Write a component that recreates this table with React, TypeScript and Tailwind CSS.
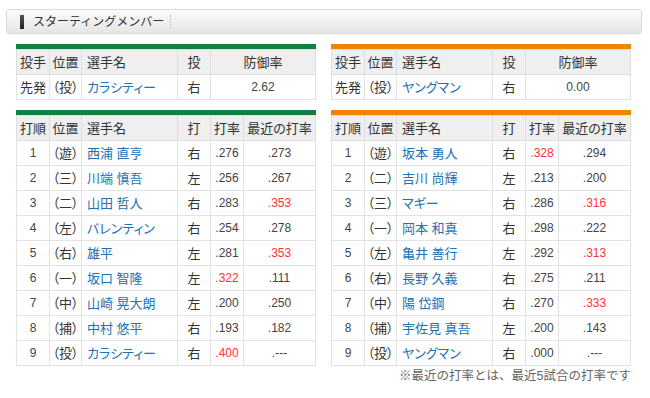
const pitchers = {
  left: { order: "先発", pos: "投", name: "カラシティー", hand: "右", era: "2.62" },
  right: { order: "先発", pos: "投", name: "ヤングマン", hand: "右", era: "0.00" },
};

type Batter = [number, string, string, string, string, string, boolean, boolean];

const leftBatters: Batter[] = [
  [1, "遊", "西浦 直亨", "右", ".276", ".273", false, false],
  [2, "三", "川端 慎吾", "左", ".256", ".267", false, false],
  [3, "二", "山田 哲人", "右", ".283", ".353", false, true],
  [4, "左", "バレンティン", "右", ".254", ".278", false, false],
  [5, "右", "雄平", "左", ".281", ".353", false, true],
  [6, "一", "坂口 智隆", "左", ".322", ".111", true, false],
  [7, "中", "山崎 晃大朗", "左", ".200", ".250", false, false],
  [8, "捕", "中村 悠平", "右", ".193", ".182", false, false],
  [9, "投", "カラシティー", "右", ".400", ".---", true, false],
];

const rightBatters: Batter[] = [
  [1, "遊", "坂本 勇人", "右", ".328", ".294", true, false],
  [2, "二", "吉川 尚輝", "左", ".213", ".200", false, false],
  [3, "三", "マギー", "右", ".286", ".316", false, true],
  [4, "一", "岡本 和真", "右", ".298", ".222", false, false],
  [5, "左", "亀井 善行", "左", ".292", ".313", false, true],
  [6, "右", "長野 久義", "右", ".275", ".211", false, false],
  [7, "中", "陽 岱鋼", "右", ".270", ".333", false, true],
  [8, "捕", "宇佐見 真吾", "左", ".200", ".143", false, false],
  [9, "投", "ヤングマン", "右", ".000", ".---", false, false],
];

const th = "h-[25px] p-0 border border-[#dedede] bg-[#efefef] font-normal text-[13px] text-[#333] text-center";
const td = "h-[25px] p-0 border border-[#e2e2e2] bg-white text-[13px] text-[#333] text-center";
const num = "h-[25px] p-0 border border-[#e2e2e2] bg-white text-[12px] text-center";

const PitcherTable = ({ side, bar }: { side: "left" | "right"; bar: string }) => {
  const p = pitchers[side];
  return (
    <div className="w-[300px]">
      <div className={`h-[5px] ${bar}`} />
      <table className="w-full table-fixed border-collapse">
        <colgroup>
          <col className="w-[33px]" />
          <col className="w-[32px]" />
          <col className="w-[96px]" />
          <col className="w-[33px]" />
          <col />
        </colgroup>
        <thead>
          <tr>
            <th className={th}>投手</th>
            <th className={th}>位置</th>
            <th className={`${th} !text-left pl-[5px]`}>選手名</th>
            <th className={th}>投</th>
            <th className={th}>防御率</th>
          </tr>
        </thead>
        <tbody>
          <tr>
            <td className={td}>{p.order}</td>
            <td className={td}>（{p.pos}）</td>
            <td className={`${td} !text-left pl-[5px] !text-[#2271b3]`}>{p.name}</td>
            <td className={td}>{p.hand}</td>
            <td className={`${num} text-[#444]`}>{p.era}</td>
          </tr>
        </tbody>
      </table>
    </div>
  );
};

const BatterTable = ({ rows, bar }: { rows: Batter[]; bar: string }) => {
  return (
    <div className="w-[300px]">
      <div className={`h-[5px] ${bar}`} />
      <table className="w-full table-fixed border-collapse">
        <colgroup>
          <col className="w-[33px]" />
          <col className="w-[32px]" />
          <col className="w-[96px]" />
          <col className="w-[33px]" />
          <col className="w-[33px]" />
          <col />
        </colgroup>
        <thead>
          <tr>
            <th className={th}>打順</th>
            <th className={th}>位置</th>
            <th className={`${th} !text-left pl-[5px]`}>選手名</th>
            <th className={th}>打</th>
            <th className={th}>打率</th>
            <th className={th}>最近の打率</th>
          </tr>
        </thead>
        <tbody>
          {rows.map((row, index) => {
            const [order, pos, name, hand, avg, recent, avgRed, recentRed] = row;
            return (
              <tr key={index}>
                <td className={`${num} text-[#444]`}>{order}</td>
                <td className={td}>（{pos}）</td>
                <td className={`${td} !text-left pl-[5px] !text-[#2271b3]`}>{name}</td>
                <td className={td}>{hand}</td>
                <td className={`${num} ${avgRed ? "text-[#f33]" : "text-[#444]"}`}>{avg}</td>
                <td className={`${num} ${recentRed ? "text-[#f33]" : "text-[#444]"}`}>{recent}</td>
              </tr>
            );
          })}
        </tbody>
      </table>
    </div>
  );
};

export default function App() {
  return (
    <div className="w-[650px] h-[398px] bg-white pt-[9px] pl-[6px] font-['Liberation_Sans','Noto_Sans_CJK_JP',sans-serif] [font-feature-settings:'palt'] leading-none">
      <div className="w-[636px] h-[25px] flex items-center rounded-[3px] border border-[#dcdcdc] bg-gradient-to-b from-[#fbfbfb] via-[#f0f0f0] to-[#e6e6e6] shadow-[0_1px_1px_rgba(0,0,0,0.04)]">
        <div className="ml-[13px] w-[4px] h-[14px] bg-gradient-to-b from-[#555] to-[#222]" />
        <span className="ml-[9px] text-[12px] text-[#333] [font-feature-settings:normal]">スターティングメンバー</span>
        <div className="ml-[6px] h-[14px] border-l border-dotted border-[#bbb]" />
      </div>

      <div className="ml-[10px] mt-[10px] flex gap-[15px]">
        <div className="flex flex-col gap-[10px]">
          <PitcherTable side="left" bar="bg-[#177e42]" />
          <BatterTable rows={leftBatters} bar="bg-[#177e42]" />
        </div>
        <div className="flex flex-col gap-[10px]">
          <PitcherTable side="right" bar="bg-[#f08300]" />
          <BatterTable rows={rightBatters} bar="bg-[#f08300]" />
        </div>
      </div>

      <div className="w-[625px] mt-[4px] text-right text-[12.5px] text-[#666] [font-feature-settings:normal]">※最近の打率とは、最近5試合の打率です</div>
    </div>
  );
}
